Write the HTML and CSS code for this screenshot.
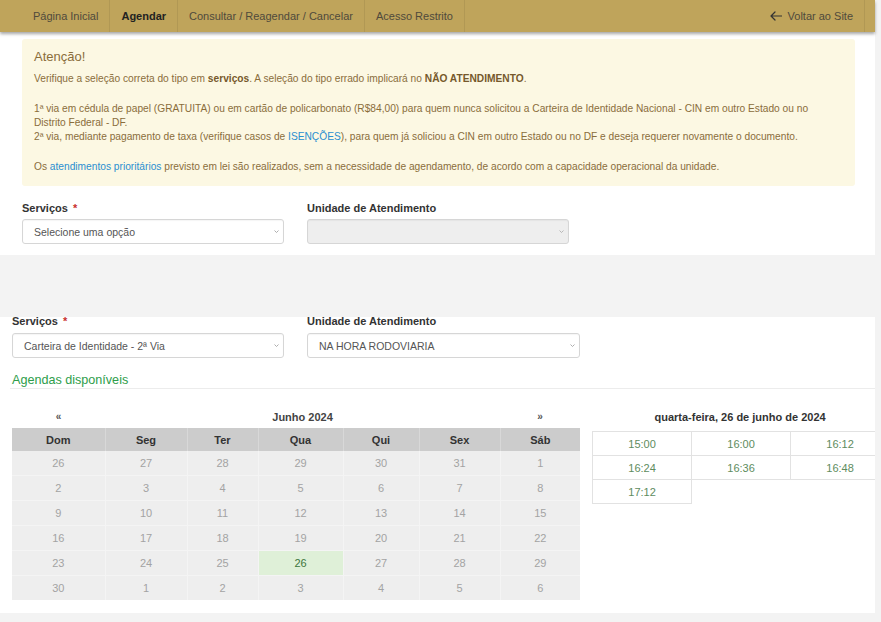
FILE: index.html
```html
<!DOCTYPE html>
<html lang="pt-BR">
<head>
<meta charset="utf-8">
<title>Agendar</title>
<link rel="stylesheet" href="styles.css">
</head>
<body>
<div class="page">
  <section class="panel-top">
    <nav class="nav">
      <a class="nav-item" href="#">Página Inicial</a>
      <a class="nav-item active" href="#">Agendar</a>
      <a class="nav-item" href="#">Consultar / Reagendar / Cancelar</a>
      <a class="nav-item" href="#">Acesso Restrito</a>
      <a class="nav-item back" href="#">
        <svg class="back-icon" width="12" height="10" viewBox="0 0 12 10" fill="none" stroke="#333" stroke-width="1.2" stroke-linecap="round" stroke-linejoin="round"><path d="M11.5 5H1M5 1L1 5l4 4"/></svg>
        <span>Voltar ao Site</span>
      </a>
    </nav>
    <div class="content">
      <div class="alert">
        <h4 class="alert-title">Atenção!</h4>
        <p>Verifique a seleção correta do tipo em <b>serviços</b>. A seleção do tipo errado implicará no <b>NÃO ATENDIMENTO</b>.</p>
        <p>1ª via em cédula de papel (GRATUITA) ou em cartão de policarbonato (R$84,00) para quem nunca solicitou a Carteira de Identidade Nacional - CIN em outro Estado ou no Distrito Federal - DF.<br>2ª via, mediante pagamento de taxa (verifique casos de <a href="#">ISENÇÕES</a>), para quem já soliciou a CIN em outro Estado ou no DF e deseja requerer novamente o documento.</p>
        <p class="last">Os <a href="#">atendimentos prioritários</a> previsto em lei são realizados, sem a necessidade de agendamento, de acordo com a capacidade operacional da unidade.</p>
      </div>
      <div class="form-row top-row">
        <div class="field f262">
          <label class="label">Serviços <span class="req">*</span></label>
          <div class="select"><span>Selecione uma opção</span><svg class="chev" width="5" height="3" viewBox="0 0 5 3"><path d="M0.5 0.5L2.5 2.5L4.5 0.5" fill="none" stroke="#999" stroke-width="0.8"/></svg></div>
        </div>
        <div class="field f262">
          <label class="label">Unidade de Atendimento</label>
          <div class="select disabled"><span></span><svg class="chev" width="5" height="3" viewBox="0 0 5 3"><path d="M0.5 0.5L2.5 2.5L4.5 0.5" fill="none" stroke="#aaa" stroke-width="0.8"/></svg></div>
        </div>
      </div>
    </div>
  </section>

  <section class="panel-bottom">
    <div class="form-row bottom-row">
      <div class="field f272">
        <label class="label">Serviços <span class="req">*</span></label>
        <div class="select"><span>Carteira de Identidade - 2ª Via</span><svg class="chev" width="5" height="3" viewBox="0 0 5 3"><path d="M0.5 0.5L2.5 2.5L4.5 0.5" fill="none" stroke="#999" stroke-width="0.8"/></svg></div>
      </div>
      <div class="field f273">
        <label class="label">Unidade de Atendimento</label>
        <div class="select"><span>NA HORA RODOVIARIA</span><svg class="chev" width="5" height="3" viewBox="0 0 5 3"><path d="M0.5 0.5L2.5 2.5L4.5 0.5" fill="none" stroke="#999" stroke-width="0.8"/></svg></div>
      </div>
    </div>
    <h3 class="agendas">Agendas disponíveis</h3>
    <div class="schedule">
      <table class="cal">
        <colgroup>
          <col class="c1"><col class="c2"><col class="c3"><col class="c4"><col class="c5"><col class="c6"><col class="c7">
        </colgroup>
        <thead>
          <tr class="cal-nav">
            <th>«</th>
            <th colspan="5" class="month">Junho 2024</th>
            <th>»</th>
          </tr>
          <tr class="cal-head">
            <th>Dom</th><th>Seg</th><th>Ter</th><th>Qua</th><th>Qui</th><th>Sex</th><th>Sáb</th>
          </tr>
        </thead>
        <tbody>
          <tr><td>26</td><td>27</td><td>28</td><td>29</td><td>30</td><td>31</td><td>1</td></tr>
          <tr><td>2</td><td>3</td><td>4</td><td>5</td><td>6</td><td>7</td><td>8</td></tr>
          <tr><td>9</td><td>10</td><td>11</td><td>12</td><td>13</td><td>14</td><td>15</td></tr>
          <tr><td>16</td><td>17</td><td>18</td><td>19</td><td>20</td><td>21</td><td>22</td></tr>
          <tr><td>23</td><td>24</td><td>25</td><td class="sel">26</td><td>27</td><td>28</td><td>29</td></tr>
          <tr><td>30</td><td>1</td><td>2</td><td>3</td><td>4</td><td>5</td><td>6</td></tr>
        </tbody>
      </table>
      <div class="times">
        <div class="times-title">quarta-feira, 26 de junho de 2024</div>
        <div class="slots-clip">
          <table class="slots">
            <tr><td>15:00</td><td>16:00</td><td>16:12</td></tr>
            <tr><td>16:24</td><td>16:36</td><td>16:48</td></tr>
            <tr><td>17:12</td><td class="empty"></td><td class="empty"></td></tr>
          </table>
        </div>
      </div>
    </div>
  </section>
</div>
</body>
</html>
```
FILE: styles.css
```css
html, body {
  margin: 0;
  padding: 0;
}
body {
  background: #f3f3f3;
  font-family: "Liberation Sans", Arial, sans-serif;
  width: 881px;
  height: 622px;
  overflow: hidden;
}
.page {
  width: 875px;
}

/* ---------- top panel ---------- */
.panel-top {
  background: #fff;
  height: 255px;
}
.nav {
  height: 32px;
  background: #bfa45b;
  display: flex;
  align-items: stretch;
  padding: 0 10px 0 22px;
  box-shadow: 0 2px 3px rgba(0, 0, 0, 0.35);
  position: relative;
  z-index: 1;
  font-size: 11px;
}
.nav-item {
  display: flex;
  align-items: center;
  padding: 0 11px;
  color: #4f4a3c;
  text-decoration: none;
  border-right: 1px solid rgba(0, 0, 0, 0.07);
}
.nav-item.active {
  font-weight: bold;
  color: #222;
}
.nav-item.back {
  margin-left: auto;
  gap: 6px;
}
.back-icon {
  display: block;
}

.content {
  padding: 7px 20px 0 22px;
}
.alert {
  background: #fcf8e3;
  color: #8a6d3b;
  padding: 10px 30px 12px 12px;
  border-radius: 3px;
  font-size: 10.2px;
  line-height: 14px;
}
.alert-title {
  margin: 0 0 7px;
  font-size: 13px;
  line-height: 16px;
  font-weight: normal;
}
.alert p {
  margin: 0 0 16px;
}
.alert p.last {
  margin-bottom: 0;
}
.alert b {
  color: #76592b;
}
.alert a {
  color: #2a8fd0;
  text-decoration: none;
}

.form-row {
  display: flex;
  gap: 23px;
}
.top-row {
  margin-top: 15px;
}
.field {
  display: flex;
  flex-direction: column;
}
.f262 { width: 262px; }
.f272 { width: 272px; }
.f273 { width: 273px; }
.label {
  font-size: 11px;
  line-height: 14px;
  font-weight: bold;
  color: #333;
  margin-bottom: 4px;
}
.req {
  color: #c9302c;
  margin-left: 2px;
}
.select {
  height: 25px;
  box-sizing: border-box;
  border: 1px solid #d6d6d6;
  border-radius: 3px;
  background: #fff;
  display: flex;
  align-items: center;
  justify-content: space-between;
  padding: 0 4px 0 11px;
  font-size: 10.5px;
  color: #555;
  box-shadow: inset 0 1px 1px rgba(0, 0, 0, 0.04);
}
.select.disabled {
  background: #eeeeee;
}
.chev {
  display: block;
}

/* ---------- bottom panel ---------- */
.panel-bottom {
  background: #fff;
  height: 296px;
  margin-top: 62px;
  padding-left: 12px;
}
.bottom-row .label {
  line-height: 9px;
  margin-bottom: 7px;
}
.agendas {
  margin: 14px 0 0 -2px;
  padding-left: 2px;
  font-size: 12.6px;
  line-height: 16px;
  font-weight: normal;
  color: #2e9d4a;
  border-bottom: 1px solid #ececec;
}
.schedule {
  display: flex;
  gap: 12px;
  margin-top: 16px;
  align-items: flex-start;
}

.cal {
  border-collapse: collapse;
  table-layout: fixed;
  width: 568px;
  font-size: 11px;
  flex: none;
}
.cal .c1 { width: 93px; }
.cal .c2 { width: 82px; }
.cal .c3 { width: 71px; }
.cal .c4 { width: 85px; }
.cal .c5 { width: 76px; }
.cal .c6 { width: 81px; }
.cal .c7 { width: 80px; }
.cal-nav th {
  height: 23px;
  padding: 0;
  font-weight: bold;
  color: #444;
  font-size: 11px;
}
.cal-nav th:first-child,
.cal-nav th:last-child {
  font-size: 10px;
  color: #555;
}
.cal-head th {
  height: 23px;
  padding: 0;
  background: #cccccc;
  color: #333;
  font-weight: bold;
  border: 1px solid #d8d8d8;
  border-top: none;
  border-bottom: none;
}
.cal td {
  height: 24px;
  padding: 0;
  text-align: center;
  background: #eeeeee;
  color: #a3a3a3;
  border: 1px solid #f4f4f4;
}
.cal tbody tr:first-child td {
  border-top: none;
}
.cal tbody tr:last-child td {
  border-bottom: none;
}
.cal tr td:first-child,
.cal tr th:first-child {
  border-left: none;
}
.cal tr td:last-child,
.cal tr th:last-child {
  border-right: none;
}
.cal td.sel {
  background: #dff0d8;
  color: #3c763d;
}

.times {
  width: 283px;
  flex: none;
  margin-top: 5px;
}
.times-title {
  width: 296px;
  text-align: center;
  font-size: 11px;
  line-height: 14px;
  font-weight: bold;
  color: #333;
  margin-bottom: 7px;
}
.slots-clip {
  width: 283px;
  overflow: hidden;
}
.slots {
  border-collapse: collapse;
  table-layout: fixed;
  width: 296px;
  font-size: 11px;
}
.slots td {
  width: 98px;
  height: 23px;
  padding: 0;
  text-align: center;
  color: #5e8c5e;
  border: 1px solid #e2e2e2;
}
.slots td.empty {
  border: none;
}
```
